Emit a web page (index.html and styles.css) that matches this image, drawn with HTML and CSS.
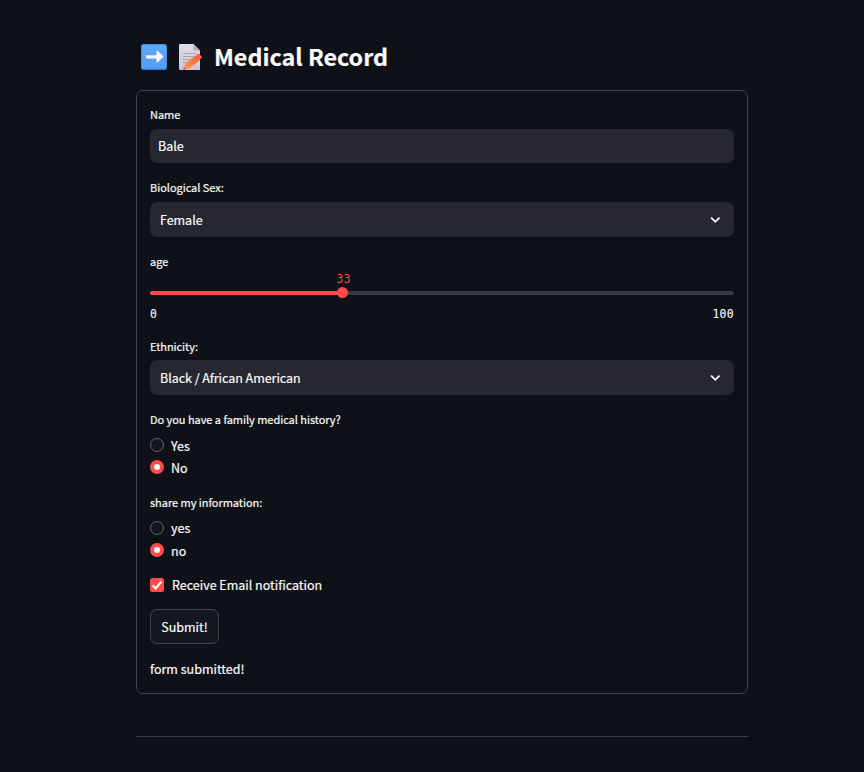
FILE: index.html
```html
<!DOCTYPE html>
<html lang="en">
<head>
<meta charset="utf-8">
<title>Medical Record</title>
<link rel="stylesheet" href="styles.css">
</head>
<body>
<main class="page">
  <h1 class="title">
    <svg class="emoji arrow" viewBox="0 0 26 26" aria-hidden="true">
      <defs><linearGradient id="blue" x2="0" y2="1"><stop stop-color="#5aaaf9"/><stop offset="1" stop-color="#559df5"/></linearGradient></defs>
      <rect width="26" height="26" rx="2.5" fill="#3978cd"/>
      <rect x=".5" y=".4" width="25" height="24.4" rx="2" fill="url(#blue)"/>
      <path d="M5 11.2h10.500V7.200q0-1 .9-.4l5.700 5.300q.6.600 0 1.200l-5.700 5.200q-.9.600-.9-.4v-3.600H5z" fill="#fbf4ff"/>
    </svg>
    <svg class="emoji memo" viewBox="0 0 24 26" aria-hidden="true">
      <defs>
        <linearGradient id="paper" x2="0" y2="1"><stop stop-color="#e1dce9"/><stop offset="1" stop-color="#cfc4da"/></linearGradient>
        <linearGradient id="pencil" x1="1" y1="0" x2="0" y2="1"><stop stop-color="#f45f36"/><stop offset="1" stop-color="#ffa04b"/></linearGradient>
      </defs>
      <path d="M1 0h13.500L21 6.500V26H1q-1 0-1-1V1q0-1 1-1z" fill="url(#paper)"/>
      <path d="M14.500 0 21 6.500h-5.500q-1 0-1-1z" fill="#b6abbd"/>
      <path d="M4 9.500h13M4 12.500h13M4 15.500h9M4 18.500h5" stroke="#aaa2b1" stroke-width="1"/>
      <path d="m6.300 19.400 10.900-8.200 4 4.600-10.200 8.200-5.800 1.600q-.9 0-.5-1z" fill="url(#pencil)"/>
      <path d="m17 11.400 2.200-1.600q.8-.4 1.400.3l2.200 2.600q.5.700-.2 1.300l-1.900 1.600z" fill="#ff5b58"/>
      <path d="m4.800 23.200 1.800 1.800-2.200.5z" fill="#694151"/>
    </svg>
    <span class="title-text">Medical Record</span>
  </h1>

  <form class="form">
    <div class="field">
      <label class="label name">Name</label>
      <div class="control text-input">Bale</div>
    </div>
    <div class="field">
      <label class="label sex">Biological Sex:</label>
      <div class="control select"><span>Female</span><svg class="chevron" viewBox="0 0 14 14"><path d="m3.100 4.600 4.200 4.200 4.200-4.200"/></svg></div>
    </div>
    <div class="field age">
      <label class="label">age</label>
      <div class="slider">
        <div class="track"><div class="fill" style="width:33%"></div><div class="thumb" style="left:33%"><span class="value">33</span></div></div>
        <div class="ticks"><span>0</span><span>100</span></div>
      </div>
    </div>
    <div class="field ethnicity">
      <label class="label">Ethnicity:</label>
      <div class="control select"><span>Black / African American</span><svg class="chevron" viewBox="0 0 14 14"><path d="m3.100 4.600 4.200 4.200 4.200-4.200"/></svg></div>
    </div>
    <div class="field history">
      <label class="label">Do you have a family medical history?</label>
      <div class="option"><span class="radio"></span><span class="yes">Yes</span></div>
      <div class="option"><span class="radio checked"></span><span>No</span></div>
    </div>
    <div class="field share">
      <label class="label">share my information:</label>
      <div class="option"><span class="radio"></span><span>yes</span></div>
      <div class="option"><span class="radio checked"></span><span>no</span></div>
    </div>
    <div class="notify"><svg class="check" viewBox="0 0 14 14"><rect width="14" height="14" rx="2.500"/><path d="m2.500 7.200 3.100 3.200L11.500 3.500"/></svg><span>Receive Email notification</span></div>
    <button class="submit" type="button">Submit!</button>
    <p class="message">form submitted!</p>
  </form>
  <hr class="divider">
</main>
</body>
</html>
```
FILE: styles.css
```css
* { box-sizing: border-box; }
body {
  margin: 0;
  background: #0e1117;
  color: #fafafa;
  font: 12.5px/22px "Noto Sans CJK SC", "Noto Sans", sans-serif;
  -webkit-text-stroke: 0.2px;
}
.page { width: 612px; margin-left: 136px; padding-top: 40px; }
.title {
  display: flex;
  align-items: center;
  height: 34px;
  margin: 0 0 16px;
  padding-left: 5px;
  font-size: 23.3px;
  font-weight: 700;
  line-height: 34px;
  white-space: nowrap;
}
.title-text { padding-bottom: 2px; }
.emoji { flex: none; height: 26px; }
.arrow { width: 26px; margin-right: 12px; }
.memo { width: 24px; margin-right: 11px; }
.form {
  height: 604px;
  padding: 14px 13px;
  border: 1px solid #41444c;
  border-radius: 7px;
}
.field { margin-bottom: 15px; }
.label {
  display: block;
  height: 20px;
  margin-bottom: 4px;
  font-size: 11px;
  line-height: 18px;
  letter-spacing: -0.04px;
}
.control {
  display: flex;
  align-items: center;
  background: #262730;
  border-radius: 7px;
}
.text-input { height: 34px; padding-left: 8px; }
.select { height: 35px; padding: 0 12px 0 10px; justify-content: space-between; letter-spacing: -0.03px; }
.chevron { width: 14px; height: 14px; }
.chevron path { fill: none; stroke: #fafafa; stroke-width: 1.8; }
.age .label { margin: 0; }
.slider { height: 50px; padding-top: 19px; }
.track { position: relative; height: 4px; background: #363a42; border-radius: 2px; }
.fill { height: 100%; background: #ff4b4b; border-radius: 2px; }
.thumb {
  position: absolute;
  top: -4px;
  width: 11px;
  height: 11px;
  margin-left: -5.3px;
  background: #ff4b4b;
  border-radius: 50%;
}
.value {
  position: absolute;
  left: -1px;
  bottom: 12px;
  color: #ff4b4b;
  font: 11.4px/14px "DejaVu Sans Mono", monospace;
  letter-spacing: 0.35px;
  -webkit-text-stroke: 0;
}
.ticks {
  display: flex;
  justify-content: space-between;
  margin-top: 11px;
  font: 11.4px/16px "DejaVu Sans Mono", monospace;
  letter-spacing: 0.35px;
  -webkit-text-stroke: 0.1px;
}
.ethnicity .label { margin-bottom: 3px; }
.option { display: flex; align-items: center; height: 22.5px; gap: 7px; }
.yes { padding-top: 2px; }
.history { margin-bottom: 14px; }
.radio {
  width: 14px;
  height: 14px;
  background: #131720;
  border: 1px solid #62656b;
  border-radius: 50%;
}
.checked { margin-bottom: 1px; background: #fafafa; border: 4px solid #ff4b4b; }
.share { margin-bottom: 12px; }
.notify { display: flex; align-items: center; height: 22px; gap: 8px; }
.check { width: 14px; height: 14px; }
.check rect { fill: #ff4b4b; }
.check path { fill: none; stroke: #fff; stroke-width: 2; }
.submit {
  display: block;
  width: 69px;
  height: 35px;
  margin: 13px 0 14px;
  padding: 0;
  background: #131720;
  border: 1px solid #41444c;
  border-radius: 7px;
  color: inherit;
  font: inherit;
}
.message { margin: 0; }
.divider { height: 1px; margin: 42px 0 0; border: 0; background: #3b3e45; }
```
